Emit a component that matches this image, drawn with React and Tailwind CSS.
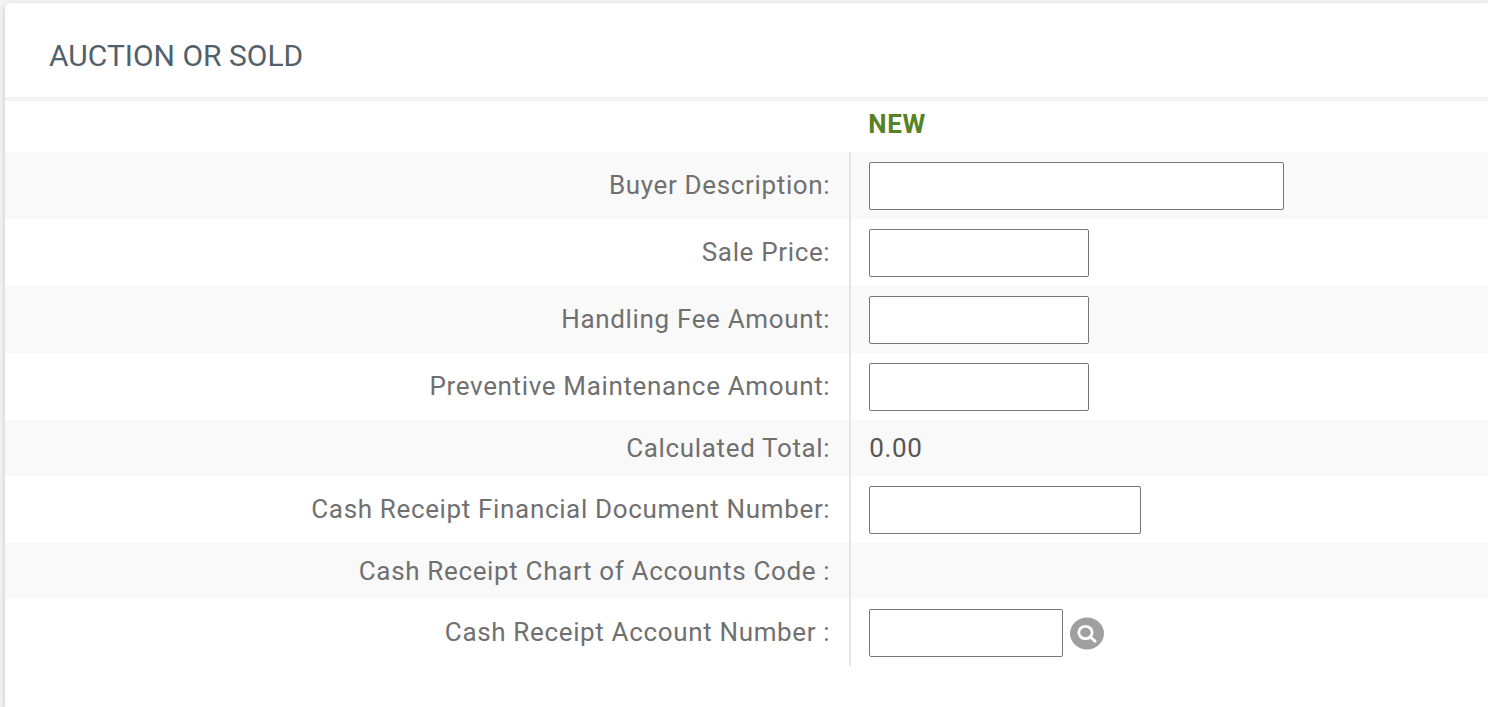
import React from 'react';

const fields = [
  { id: 'buyerDescription', label: 'Buyer Description:', width: 'w-[415px]' },
  { id: 'salePrice', label: 'Sale Price:', width: 'w-[220px]' },
  { id: 'handlingFee', label: 'Handling Fee Amount:', width: 'w-[220px]' },
  { id: 'maintenance', label: 'Preventive Maintenance Amount:', width: 'w-[220px]' },
  { id: 'total', label: 'Calculated Total:', value: '0.00' },
  { id: 'documentNumber', label: 'Cash Receipt Financial Document Number:', width: 'w-[272px]' },
  { id: 'chartCode', label: 'Cash Receipt Chart of Accounts Code :', value: '' },
  { id: 'accountNumber', label: 'Cash Receipt Account Number :', width: 'w-[194px]', lookup: true },
];

const LookupButton = () => (
  <button type="button" aria-label="Search Account Number" className="cursor-pointer">
    <svg className="h-[34px] w-[34px]" viewBox="0 0 34 34" fill="none">
      <ellipse cx="17" cy="17.5" rx="17" ry="16" fill="#a0a0a0" />
      <ellipse cx="15.5" cy="16.5" rx="6.7" ry="6.2" stroke="#fff" strokeWidth="2.8" />
      <path d="M20.5 21l4.5 4.2" stroke="#fff" strokeWidth="3" strokeLinecap="round" />
    </svg>
  </button>
);

const Row = ({ field }) => {
  const { id, label, width, value, lookup } = field;
  return (
    <tr className={width ? 'h-[67px] odd:bg-[#f9f9f9]' : 'h-14 odd:bg-[#f9f9f9]'}>
      <th scope="row" className={`${width ? 'pb-[2px]' : ''} border-r-2 border-[#dce9e6] pr-[19px] text-right font-normal text-[#707070]`}>
        {width ? <label htmlFor={id}>{label}</label> : label}
      </th>
      <td className="pl-[18px] text-[#555555]">
        {width ? (
          <div className="flex items-center gap-[7px]">
            <input id={id} type="text" className={`${width} h-12 rounded-[2px] border border-[#767676] bg-white px-2`} />
            {lookup && <LookupButton />}
          </div>
        ) : (
          value
        )}
      </td>
    </tr>
  );
};

const App = () => {
  return (
    <main className="min-h-screen bg-[#f4f4f4] pl-[5px] pt-[3px] font-['Roboto',sans-serif]">
      <section className="min-h-[calc(100vh-3px)] rounded-tl-[5px] bg-white shadow-[0_2px_6px_rgba(0,0,0,0.2)]">
        <h2 className="border-b-4 border-[#f2f2f2] px-11 pt-[35px] pb-[23px] text-[30px] leading-9 text-[#535f69]">
          AUCTION OR SOLD
        </h2>
        <table className="w-full table-fixed border-collapse text-[26px] leading-8 tracking-wide">
          <thead>
            <tr className="h-[51px]">
              <td className="w-[57%]"></td>
              <th scope="col" className="pb-[6px] pl-[18px] text-left font-bold text-[#568224]">NEW</th>
            </tr>
          </thead>
          <tbody>
            {fields.map((field) => (
              <Row key={field.id} field={field} />
            ))}
          </tbody>
        </table>
      </section>
    </main>
  );
};

export default App;
